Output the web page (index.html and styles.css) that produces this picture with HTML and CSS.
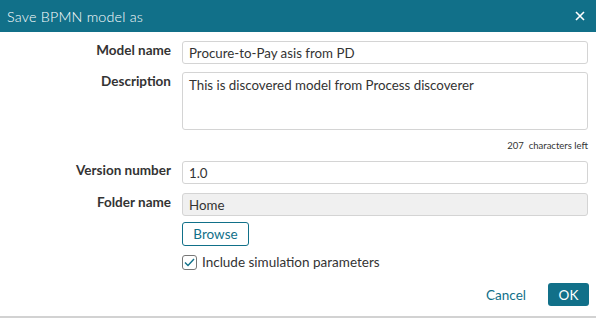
FILE: index.html
```html
<!DOCTYPE html>
<html lang="en">
<head>
    <meta charset="UTF-8">
    <title>Save BPMN model as</title>
    <link rel="stylesheet" href="styles.css">
</head>
<body>
    <div class="dialog">
        <div class="dialog-header">
            <span class="dialog-title">Save BPMN model as</span>
            <svg class="dialog-close" width="10" height="10" viewBox="0 0 10 10"><path d="M1 1 L9 9 M9 1 L1 9" stroke="#fff" stroke-width="1.6"/></svg>
        </div>
        <div class="dialog-body">
            <div class="row">
                <label class="label">Model name</label>
                <div class="field"><input class="input" type="text" value="Procure-to-Pay asis from PD"></div>
            </div>
            <div class="row">
                <label class="label">Description</label>
                <div class="field">
                    <textarea class="input textarea">This is discovered model from Process discoverer</textarea>
                    <div class="chars-left">207&nbsp; characters left</div>
                </div>
            </div>
            <div class="row row-wide">
                <label class="label">Version number</label>
                <div class="field"><input class="input" type="text" value="1.0"></div>
            </div>
            <div class="row">
                <label class="label">Folder name</label>
                <div class="field">
                    <input class="input input-readonly" type="text" value="Home" readonly>
                    <button class="btn-outline">Browse</button>
                    <label class="check">
                        <span class="check-box">
                            <svg width="11" height="9" viewBox="0 0 11 9"><path d="M1 4.5 L4 7.5 L10 1" fill="none" stroke="#117089" stroke-width="1.4"/></svg>
                        </span>
                        Include simulation parameters
                    </label>
                </div>
            </div>
        </div>
        <div class="dialog-footer">
            <button class="btn-link">Cancel</button>
            <button class="btn-primary">OK</button>
        </div>
    </div>
</body>
</html>
```

FILE: styles.css
```css
body {
    margin: 0;
    padding: 0;
    background-color: #fff;
    font-family: 'Lato', sans-serif;
    color: #333;
}
.dialog {
    width: 596px;
    height: 318px;
    display: flex;
    flex-direction: column;
    box-sizing: border-box;
    border-bottom: 2px solid #d2d2d2;
}
.dialog-header {
    background-color: #117089;
    height: 32px;
    flex-shrink: 0;
    display: flex;
    align-items: center;
    justify-content: space-between;
    padding: 0 11px 0 7px;
    color: #fff;
}
.dialog-title {
    font-family: 'Lato', sans-serif;
    font-size: 14.3px;
    font-weight: 300;
    letter-spacing: 0.2px;
}
.dialog-body {
    padding: 9px 8px 0 0;
    flex: 1;
}
.row {
    display: flex;
    margin-bottom: 8px;
}
.row-wide {
    margin-bottom: 9px;
}
.label {
    width: 182px;
    padding-right: 11px;
    box-sizing: border-box;
    text-align: right;
    font-weight: bold;
    font-size: 13.5px;
    padding-top: 1px;
}
.field {
    flex: 1;
    display: flex;
    flex-direction: column;
    align-items: flex-start;
}
.input {
    width: 100%;
    height: 23px;
    box-sizing: border-box;
    border: 1px solid #d4d4d4;
    border-radius: 3px;
    padding: 0 6px;
    font-family: 'Lato', sans-serif;
    font-size: 13.3px;
    color: #333;
    margin: 0;
    display: block;
}
.textarea {
    height: 58px;
    resize: none;
    padding-top: 4px;
    line-height: 16px;
}
.input-readonly {
    background-color: #f0f0f0;
}
.chars-left {
    align-self: flex-end;
    font-size: 9.5px;
    line-height: 12px;
    margin-top: 10px;
    margin-bottom: 1px;
}
.btn-outline {
    margin-top: 6px;
    height: 24px;
    width: 67px;
    padding: 0;
    border: 1px solid #117089;
    border-radius: 3px;
    background: #fff;
    color: #117089;
    font-family: 'Lato', sans-serif;
    font-size: 13.5px;
}
.check {
    display: flex;
    align-items: center;
    margin-top: 8px;
    font-size: 13.5px;
}
.check-box {
    width: 13px;
    height: 13px;
    border: 1px solid #777;
    border-radius: 3px;
    display: flex;
    align-items: center;
    justify-content: center;
    margin-right: 5px;
}
.dialog-footer {
    display: flex;
    justify-content: flex-end;
    align-items: center;
    padding: 0 7px 10px 0;
}
.btn-link {
    background: none;
    border: none;
    color: #117089;
    font-family: 'Lato', sans-serif;
    font-size: 13.5px;
    margin-right: 16px;
}
.btn-primary {
    background-color: #117089;
    color: #fff;
    border: none;
    border-radius: 3px;
    height: 23px;
    width: 41px;
    font-family: 'Lato', sans-serif;
    font-size: 13.5px;
}
```
